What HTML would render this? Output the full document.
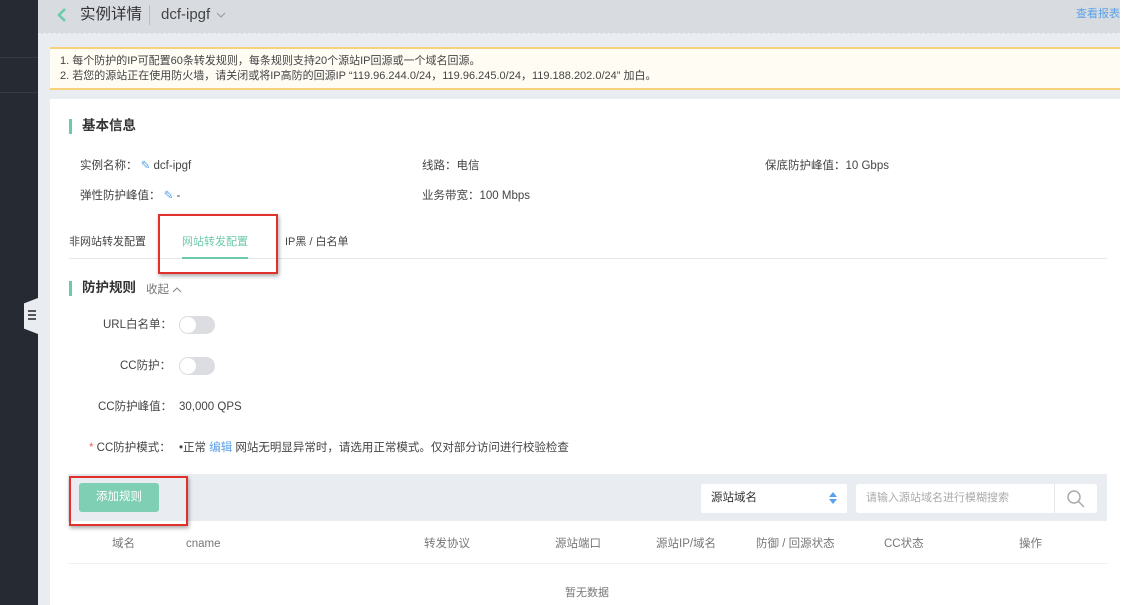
<!DOCTYPE html>
<html><head><meta charset="utf-8"><style>
*{margin:0;padding:0;box-sizing:border-box}
body{width:1125px;height:605px;overflow:hidden;background:#e9edf2;font-family:"Liberation Sans","Noto Sans CJK SC",sans-serif;font-size:11.5px;color:#333;position:relative}
.a{position:absolute;white-space:nowrap;line-height:16px}
.sb{left:0;top:0;width:38px;height:605px;background:#262a33}
.hd{left:38px;top:0;width:1082px;height:34px;background:#d8dbe0;border-bottom:1px dashed #eef0f3}
.tip{left:50px;top:47px;width:1070px;height:43px;background:#fffcf4;border-top:2px solid #f8d27a;border-bottom:2px solid #f8d27a;font-size:11px;color:#444;line-height:15px;padding:5px 0 0 10px}
.card{left:50px;top:99px;width:1070px;height:506px;background:#fff}
.rt{left:1120px;top:0;width:5px;height:605px;background:#fff}
.bar{width:3px;height:15px;background:#6ccaa8}
.g{color:#444}
.red{border:2px solid #e0312b;box-shadow:1px 2px 4px rgba(0,0,0,.35)}
.sw{width:36px;height:18px;border-radius:9px;background:#dcdde1}
.sw:after{content:"";position:absolute;left:1px;top:1px;width:16px;height:16px;border-radius:50%;background:#fff}
.th{color:#777}
</style></head><body>
<div class="a sb"></div>
<div class="a" style="left:0;top:57px;width:38px;height:1px;background:#353a44"></div>
<div class="a" style="left:0;top:92px;width:38px;height:1px;background:#353a44"></div>
<div class="a" style="left:24px;top:298px;width:14px;height:36px;background:#e9edf2;clip-path:polygon(0 15%,100% 0,100% 100%,0 85%)"></div>
<div class="a" style="left:28px;top:310px;width:8px;height:10px;border-top:2px solid #555;border-bottom:2px solid #555"></div>
<div class="a" style="left:28px;top:314px;width:8px;height:2px;background:#555"></div>
<div class="a hd"></div>
<svg class="a" style="left:56px;top:7px" width="12" height="16" viewBox="0 0 12 16"><path d="M9 2 L3 8 L9 14" fill="none" stroke="#6ccaa8" stroke-width="2.5"/></svg>
<div class="a" style="left:80px;top:5px;font-size:15.5px;line-height:20px;color:#333">实例详情</div>
<div class="a" style="left:149px;top:5px;width:1px;height:20px;background:#b8bcc3"></div>
<div class="a" style="left:161px;top:5px;font-size:15px;line-height:20px;color:#444">dcf-ipgf</div>
<svg class="a" style="left:216px;top:11px" width="10" height="8" viewBox="0 0 10 8"><path d="M1 2 L5 6 L9 2" fill="none" stroke="#999" stroke-width="1"/></svg>
<div class="a" style="left:1076px;top:6px;font-size:11px;color:#5aa2e8">查看报表</div>
<div class="a tip">1. 每个防护的IP可配置60条转发规则，每条规则支持20个源站IP回源或一个域名回源。<br>2. 若您的源站正在使用防火墙，请关闭或将IP高防的回源IP “119.96.244.0/24，119.96.245.0/24，119.188.202.0/24” 加白。</div>
<div class="a card"></div>
<div class="a rt"></div>
<div class="a bar" style="left:69px;top:119px"></div>
<div class="a" style="left:82px;top:118px;font-size:13.5px;font-weight:bold;color:#333">基本信息</div>
<div class="a g" style="left:80px;top:158px">实例名称： <span style="color:#5aa2e8">✎</span> dcf-ipgf</div>
<div class="a g" style="left:422px;top:158px">线路：电信</div>
<div class="a g" style="left:765px;top:158px">保底防护峰值：10 Gbps</div>
<div class="a g" style="left:80px;top:188px">弹性防护峰值： <span style="color:#5aa2e8">✎</span> -</div>
<div class="a g" style="left:422px;top:188px">业务带宽：100 Mbps</div>
<div class="a g" style="left:69px;top:234px;font-size:11px">非网站转发配置</div>
<div class="a" style="left:182px;top:234px;color:#6ccaa8;font-size:11px">网站转发配置</div>
<div class="a g" style="left:285px;top:234px;font-size:11px">IP黑 / 白名单</div>
<div class="a" style="left:69px;top:258px;width:1038px;height:1px;background:#e5e7eb"></div>
<div class="a" style="left:182px;top:257px;width:66px;height:2px;background:#6ccaa8"></div>
<div class="a red" style="left:158px;top:214px;width:120px;height:60px"></div>
<div class="a bar" style="left:69px;top:281px"></div>
<div class="a" style="left:82px;top:280px;font-size:13.5px;font-weight:bold;color:#333">防护规则</div>
<div class="a" style="left:146px;top:282px;color:#777">收起</div>
<svg class="a" style="left:172px;top:286px" width="10" height="8" viewBox="0 0 10 8"><path d="M1 6 L5 2 L9 6" fill="none" stroke="#888" stroke-width="1"/></svg>
<div class="a g" style="left:103px;top:317px">URL白名单：</div>
<div class="a sw" style="left:179px;top:316px"></div>
<div class="a g" style="left:120px;top:358px">CC防护：</div>
<div class="a sw" style="left:179px;top:357px"></div>
<div class="a g" style="left:98px;top:399px">CC防护峰值：</div>
<div class="a g" style="left:179px;top:399px">30,000 QPS</div>
<div class="a g" style="left:89px;top:440px"><span style="color:#e66">*</span> CC防护模式：</div>
<div class="a g" style="left:179px;top:440px">•正常 <span style="color:#5aa2e8">编辑</span> 网站无明显异常时，请选用正常模式。仅对部分访问进行校验检查</div>
<div class="a" style="left:68px;top:474px;width:1039px;height:47px;background:#e9edf2"></div>
<div class="a" style="left:79px;top:483px;width:80px;height:29px;background:#7fcfb4;border-radius:3px;color:#fff;text-align:center;line-height:29px">添加规则</div>
<div class="a red" style="left:69px;top:476px;width:119px;height:50px"></div>
<div class="a" style="left:701px;top:484px;width:146px;height:29px;background:#fff;border-radius:2px;padding:6px 10px;color:#333">源站域名</div>
<svg class="a" style="left:829px;top:492px" width="8" height="12" viewBox="0 0 8 12"><path d="M4 0 L8 5 L0 5Z M0 7 L8 7 L4 12Z" fill="#5aa2e8"/></svg>
<div class="a" style="left:856px;top:484px;width:241px;height:29px;background:#fff;border-radius:3px;padding:6px 10px;color:#aaa;font-size:11px">请输入源站域名进行模糊搜索</div>
<div class="a" style="left:1054px;top:484px;width:1px;height:29px;background:#e5e7eb"></div>
<svg class="a" style="left:1066px;top:489px" width="20" height="20" viewBox="0 0 20 20"><circle cx="8" cy="8" r="6" fill="none" stroke="#aaa" stroke-width="1.5"/><line x1="12.5" y1="12.5" x2="18" y2="18" stroke="#aaa" stroke-width="1.5"/></svg>
<div class="a th" style="left:112px;top:536px">域名</div>
<div class="a th" style="left:186px;top:536px">cname</div>
<div class="a th" style="left:424px;top:536px">转发协议</div>
<div class="a th" style="left:555px;top:536px">源站端口</div>
<div class="a th" style="left:656px;top:536px">源站IP/域名</div>
<div class="a th" style="left:756px;top:536px">防御 / 回源状态</div>
<div class="a th" style="left:884px;top:536px">CC状态</div>
<div class="a th" style="left:1019px;top:536px">操作</div>
<div class="a" style="left:68px;top:563px;width:1039px;height:1px;background:#eef0f2"></div>
<div class="a" style="left:565px;top:585px;color:#777;font-size:11px">暂无数据</div>
</body></html>
